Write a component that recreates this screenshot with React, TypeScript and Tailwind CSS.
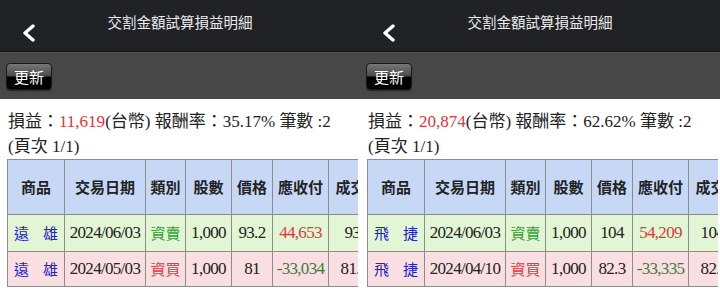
import React from "react";

type Row = {
  name: [string, string];
  date: string;
  kind: "資賣" | "資買";
  qty: string;
  price: string;
  amount: string;
  deal: string;
};

type Summary = {
  pnl: string;
  rate: string;
  count: string;
  rows: Row[];
};

const panels: Summary[] = [
  {
    pnl: "11,619",
    rate: "35.17%",
    count: "2",
    rows: [
      { name: ["遠", "雄"], date: "2024/06/03", kind: "資賣", qty: "1,000", price: "93.2", amount: "44,653", deal: "93.2" },
      { name: ["遠", "雄"], date: "2024/05/03", kind: "資買", qty: "1,000", price: "81", amount: "-33,034", deal: "81.00" },
    ],
  },
  {
    pnl: "20,874",
    rate: "62.62%",
    count: "2",
    rows: [
      { name: ["飛", "捷"], date: "2024/06/03", kind: "資賣", qty: "1,000", price: "104", amount: "54,209", deal: "104.0" },
      { name: ["飛", "捷"], date: "2024/04/10", kind: "資買", qty: "1,000", price: "82.3", amount: "-33,335", deal: "82.30" },
    ],
  },
];

const headers = ["商品", "交易日期", "類別", "股數", "價格", "應收付", "成交價"];
const widths = [57, 81, 40, 46, 41, 56, 59];

function Panel({ data }: { data: Summary }) {
  return (
    <div className="w-[360px] h-[305px] flex flex-col overflow-hidden bg-white shrink-0">
      {/* Nav bar */}
      <div className="relative h-[51px] bg-[#212226] flex justify-center pt-[12px]">
        <svg className="absolute left-[20px] top-[24px]" width="18" height="18" viewBox="0 0 18 18">
          <polyline points="13,2 5,9 13,16" fill="none" stroke="#ffffff" strokeWidth="3.4" strokeLinecap="round" strokeLinejoin="round" />
        </svg>
        <span className="text-[14.5px] leading-[20px] text-[#ececec] font-['Noto_Sans_CJK_TC',sans-serif]">
          交割金額試算損益明細
        </span>
      </div>
      <div className="h-px bg-[#141416]" />

      {/* Toolbar */}
      <div className="h-[47px] bg-[#474747] border-t border-[#525252] px-[6px] pt-[10px]">
        <button className="w-[46px] h-[27px] rounded-[4px] border border-[#1a1a1a] bg-[linear-gradient(to_bottom,#777_0%,#4a4a4a_48%,#000_52%,#000_100%)] text-white text-[15px] leading-[25px] font-['Noto_Sans_CJK_TC',sans-serif] shadow-[0_1px_1px_rgba(0,0,0,0.5)]">
          更新
        </button>
      </div>

      {/* Content */}
      <div className="pt-[10px] pl-[8px] text-[17px] leading-[25px] text-[#222] font-['Liberation_Serif','Noto_Sans_CJK_TC',serif] whitespace-nowrap">
        <div>
          損益：<span className="text-[#d9363e]">{data.pnl}</span>(台幣) 報酬率：{data.rate} 筆數 :{data.count}
        </div>
        <div>(頁次 1/1)</div>
      </div>

      <div className="pl-[7px] w-[358px] overflow-hidden">
        <table className="table-fixed border-collapse w-[380px]">
          <colgroup>
            {widths.map((w, i) => (
              <col key={i} style={{ width: w }} />
            ))}
          </colgroup>
          <thead>
            <tr className="h-[55px] bg-[#c6d8f6]">
              {headers.map((h) => (
                <th
                  key={h}
                  className="border border-[#8c8c8c] text-[15px] font-bold text-[#222] text-center whitespace-nowrap overflow-hidden font-['Noto_Sans_CJK_TC',sans-serif]"
                >
                  {h}
                </th>
              ))}
            </tr>
          </thead>
          <tbody className="font-['Liberation_Serif','Noto_Sans_CJK_TC',serif] text-[17px] tracking-[-0.7px] text-[#222]">
            {data.rows.map((r, i) => {
              const sell = r.kind === "資賣";
              return (
                <tr key={i} className={sell ? "h-[37px] bg-[#e2f5d4]" : "h-[35px] bg-[#f9dfe2]"}>
                  <td className="border border-[#8c8c8c] px-[6px]">
                    <div className="flex justify-between text-[15px] tracking-normal text-[#2323c4] font-['Noto_Sans_CJK_TC',sans-serif]">
                      <span>{r.name[0]}</span>
                      <span>{r.name[1]}</span>
                    </div>
                  </td>
                  <td className="border border-[#8c8c8c] text-center whitespace-nowrap">{r.date}</td>
                  <td
                    className={`border border-[#8c8c8c] text-center text-[15px] tracking-normal font-['Noto_Sans_CJK_TC',sans-serif] ${
                      sell ? "text-[#33a033]" : "text-[#e23b3b]"
                    }`}
                  >
                    {r.kind}
                  </td>
                  <td className="border border-[#8c8c8c] text-center">{r.qty}</td>
                  <td className="border border-[#8c8c8c] text-center">{r.price}</td>
                  <td className={`border border-[#8c8c8c] text-center ${sell ? "text-[#df3a3a]" : "text-[#3f7a3f]"}`}>
                    {r.amount}
                  </td>
                  <td className="border border-[#8c8c8c] text-center whitespace-nowrap">{r.deal}</td>
                </tr>
              );
            })}
          </tbody>
        </table>
      </div>
    </div>
  );
}

export default function App() {
  return (
    <div className="flex w-[720px] h-[305px] overflow-hidden bg-white">
      {panels.map((p, i) => (
        <Panel key={i} data={p} />
      ))}
    </div>
  );
}
